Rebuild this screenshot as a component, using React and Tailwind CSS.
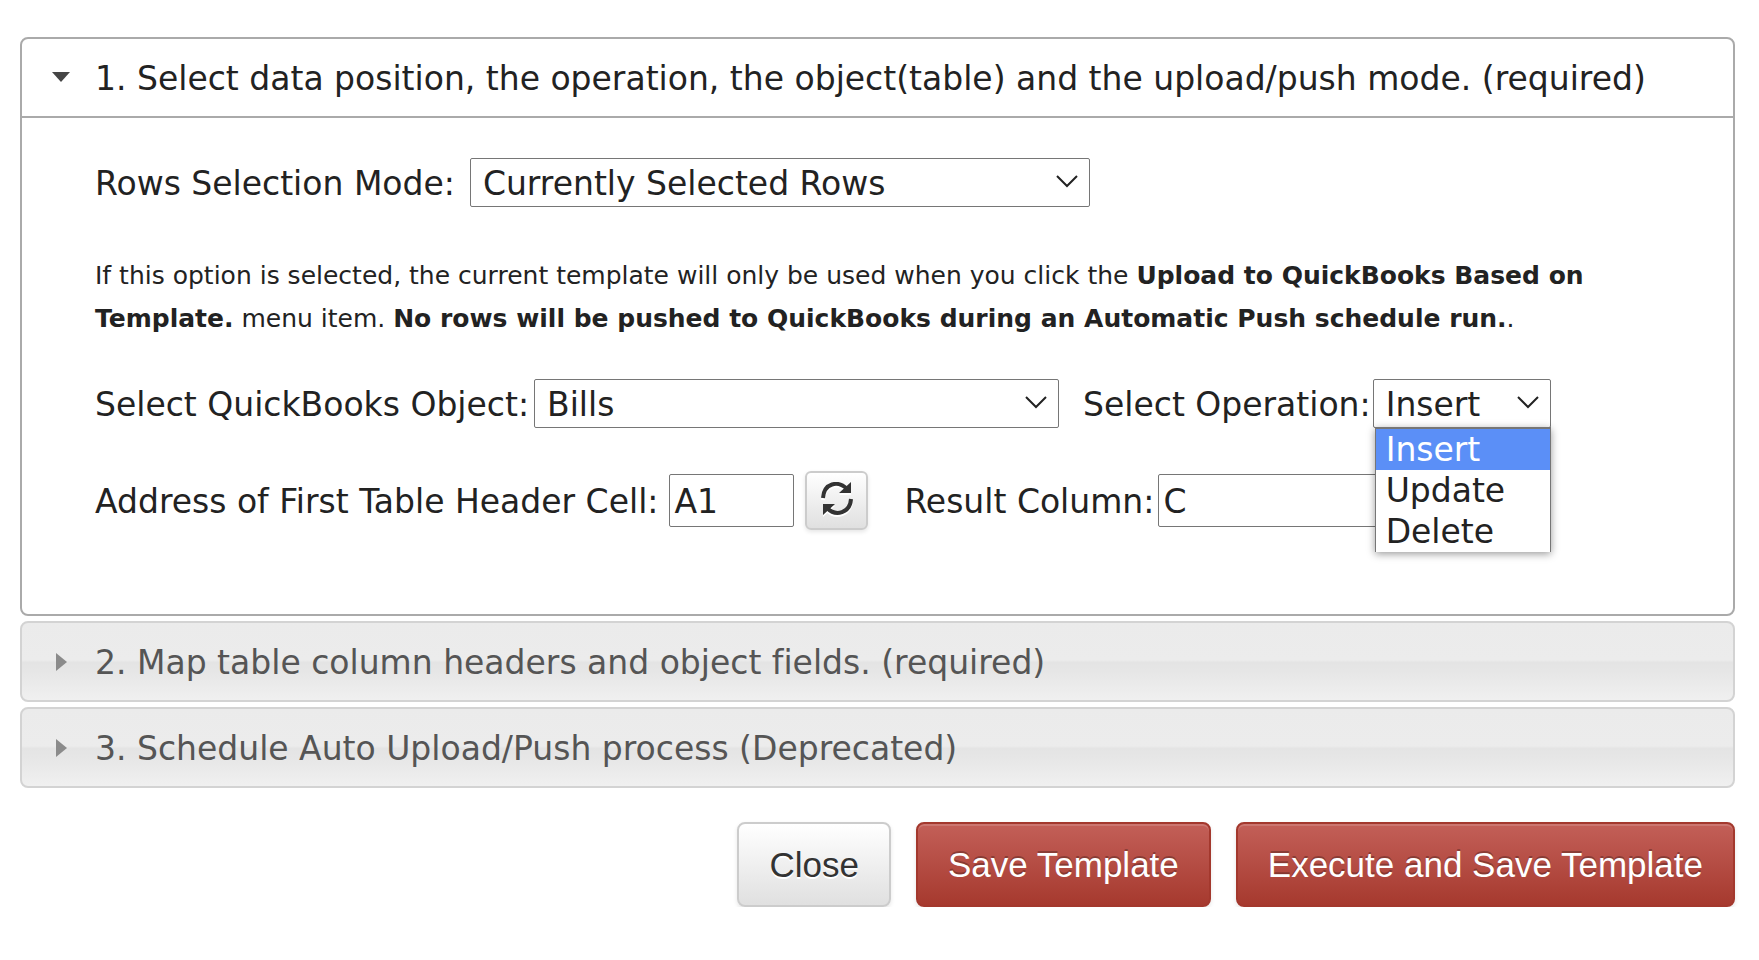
import React from 'react';

const selectClass = 'h-[49px] appearance-none rounded-xs border border-[#767676] bg-white text-[#222222] pt-0.5 pl-3 pr-10 outline-none';
const inputClass = 'h-[53px] rounded-xs border border-[#767676] bg-white text-[#222222] px-1 pt-0.5 outline-none';
const redButton = 'h-[85px] rounded-lg border-2 border-[#a3382d] bg-linear-to-b from-[#c35f58] to-[#a6392e] px-[30px] text-white [text-shadow:0_-2px_0_rgba(0,0,0,0.25)] shadow-[inset_0_2px_0_rgba(255,255,255,0.15),0_2px_4px_rgba(0,0,0,0.1)]';

function SelectBox({ id, value, options, width, children }) {
  return (
    <div className={`relative ${width}`}>
      <select id={id} defaultValue={value} className={`${selectClass} w-full`}>
        {options.map(o => <option key={o}>{o}</option>)}
      </select>
      <svg className="pointer-events-none absolute right-3 top-[17px]" width="22" height="13" viewBox="0 0 22 13" fill="none" stroke="#222222" strokeWidth="2">
        <path d="M1 1L11 11L21 1" />
      </svg>
      {children}
    </div>
  );
}

function ClosedSection({ title }) {
  return (
    <button type="button" className="flex h-[81px] w-full items-center rounded-lg border-2 border-[#d3d3d3] bg-[linear-gradient(#ebebeb,#ececec_48%,#e4e4e4_51%,#e6e6e6_62%,#f0f0f0)] pl-[34px] text-left text-[#555555]">
      <svg width="11" height="18" viewBox="0 0 11 18" className="mr-7 shrink-0" fill="#8b8b8b">
        <path d="M0 0L11 9L0 18Z" />
      </svg>
      <span className="pt-0.5">{title}</span>
    </button>
  );
}

export default function App() {
  return (
    <main className="bg-white pl-5 pr-6 pt-[37px] font-['DejaVu_Sans',sans-serif] text-[33px] leading-[42px] text-[#222222] [font-variant-ligatures:none]">
      <div className="flex flex-col gap-[5px]">
        <section className="rounded-lg border-2 border-[#aaaaaa]">
          <button type="button" className="flex h-[77px] w-full items-center pl-[30px] text-left">
            <svg width="18" height="11" viewBox="0 0 18 11" className="mr-[25px] shrink-0" fill="#454545">
              <path d="M0 0H18L9 10Z" />
            </svg>
            <span className="pt-0.5">1. Select data position, the operation, the object(table) and the upload/push mode. (required)</span>
          </button>

          <div className="h-[498px] border-t-2 border-[#aaaaaa] px-[73px] pt-10">
            <div className="flex items-center">
              <label htmlFor="rows-mode" className="mr-[15px] pt-0.5">Rows Selection Mode:</label>
              <SelectBox id="rows-mode" value="Currently Selected Rows" options={['Currently Selected Rows', 'All Rows']} width="w-[620px]" />
            </div>

            <p className="mt-[47px] text-[25px] leading-[43px]">
              If this option is selected, the current template will only be used when you click the <b>Upload to QuickBooks Based on Template.</b> menu item. <b>No rows will be pushed to QuickBooks during an Automatic Push schedule run.</b>.
            </p>

            <div className="mt-[39px] flex items-center">
              <label htmlFor="qb-object" className="mr-[5px] pt-0.5">Select QuickBooks Object:</label>
              <SelectBox id="qb-object" value="Bills" options={['Bills', 'Invoices']} width="w-[525px]" />
              <label htmlFor="operation" className="ml-6 mr-0.5 pt-0.5">Select Operation:</label>
              <SelectBox id="operation" value="Insert" options={['Insert', 'Update', 'Delete']} width="w-[178px]">
                <ul className="absolute left-0.5 right-0 top-12 z-10 border-x border-t-2 border-[#767676] bg-white leading-[41px] shadow-[0_2px_8px_rgba(0,0,0,0.4)]">
                  <li className="bg-[#5b8ff7] pl-2.5 text-white">Insert</li>
                  <li className="pl-2.5">Update</li>
                  <li className="pl-2.5">Delete</li>
                </ul>
              </SelectBox>
            </div>

            <div className="mt-[43px] flex items-center">
              <label htmlFor="header-cell" className="mr-[11px] pt-0.5">Address of First Table Header Cell:</label>
              <input id="header-cell" type="text" defaultValue="A1" className={`${inputClass} w-[125px]`} />
              <button type="button" aria-label="Refresh" className="ml-[11px] flex h-[59px] w-[63px] items-center justify-center rounded-md border-2 border-[#cccccc] bg-linear-to-b from-white to-[#e0e0e0] pb-1 shadow-[0_2px_4px_rgba(0,0,0,0.1)]">
                <svg width="32" height="34" viewBox="0 0 32 34" className="drop-shadow-[0_2px_0_#ffffff]" fill="none" stroke="#333333" strokeWidth="4">
                  <path d="M2 16C3 1 17 -2 26 7M30 17C29 31 15 35 6 26" />
                  <path d="M30 0V11H18ZM2 33V22H14Z" fill="#333333" stroke="none" />
                </svg>
              </button>
              <label htmlFor="result-column" className="ml-9 mr-1 pt-0.5">Result Column:</label>
              <input id="result-column" type="text" defaultValue="C" className={`${inputClass} w-[250px]`} />
            </div>
          </div>
        </section>

        <ClosedSection title="2. Map table column headers and object fields. (required)" />
        <ClosedSection title="3. Schedule Auto Upload/Push process (Deprecated)" />
      </div>

      <div className="mt-[34px] flex justify-end gap-[25px] font-['Liberation_Sans',sans-serif] text-[35px]">
        <button type="button" className="h-[85px] rounded-lg border-2 border-[#cccccc] bg-linear-to-b from-white to-[#e0e0e0] px-[30px] text-[#333333] [text-shadow:0_2px_0_#ffffff] shadow-[0_2px_4px_rgba(0,0,0,0.1)]">Close</button>
        <button type="button" className={redButton}>Save Template</button>
        <button type="button" className={redButton}>Execute and Save Template</button>
      </div>
    </main>
  );
}
